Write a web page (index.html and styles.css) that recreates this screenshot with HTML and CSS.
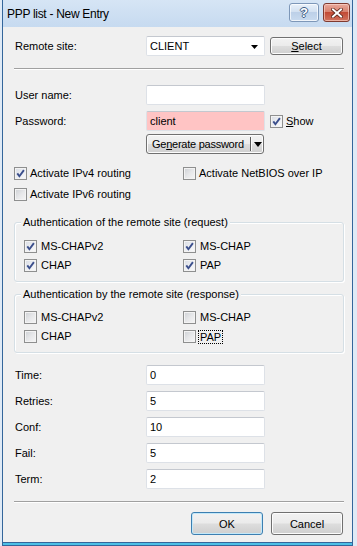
FILE: index.html
```html
<!DOCTYPE html>
<html>
<head>
<meta charset="utf-8">
<link rel="stylesheet" href="styles.css">
</head>
<body>
<div class="window">
  <div class="titlebar">
    <span class="title">PPP list - New Entry</span>
    <div class="tbtns">
      <span class="tb help">?</span>
      <span class="tb close">
        <svg width="12" height="10" viewBox="0 0 12 10">
          <path d="M2 1.5 L10 8.5 M10 1.5 L2 8.5" stroke="#5a2318" stroke-width="3.6" stroke-linecap="square"/>
          <path d="M2 1.5 L10 8.5 M10 1.5 L2 8.5" stroke="#ffffff" stroke-width="2" stroke-linecap="square"/>
        </svg>
      </span>
    </div>
  </div>
  <div class="client">
    <div class="row first">
      <span class="lbl">Remote site:</span>
      <div class="field combo"><span>CLIENT</span>
        <svg class="arrow" width="7" height="4" viewBox="0 0 7 4"><path d="M0 0 H7 L3.5 4 Z" fill="#000"/></svg>
      </div>
      <span class="btn select"><u>S</u>elect</span>
    </div>
    <div class="sep"></div>
    <div class="row sep-after">
      <span class="lbl">User name:</span>
      <div class="field"></div>
    </div>
    <div class="row gap">
      <span class="lbl">Password:</span>
      <div class="field pink">client</div>
      <span class="check show-cb">
        <span class="cb on"><svg width="11" height="11" viewBox="0 0 11 11"><path d="M2.3 5.4 L4.4 8.2 L8.9 2.1" fill="none" stroke="#3b4f8c" stroke-width="1.9"/></svg></span>
        <span><u>S</u>how</span>
      </span>
    </div>
    <div class="row genrow">
      <span class="lbl"></span>
      <span class="btn split">
        <span class="split-text">Ge<u>n</u>erate password</span>
        <span class="split-div"></span>
        <svg class="split-arrow" width="8" height="5" viewBox="0 0 8 5"><path d="M0 0 H8 L4 5 Z" fill="#000"/></svg>
      </span>
    </div>
    <div class="opts">
      <span class="check"><span class="cb on"><svg width="11" height="11" viewBox="0 0 11 11"><path d="M2.3 5.4 L4.4 8.2 L8.9 2.1" fill="none" stroke="#3b4f8c" stroke-width="1.9"/></svg></span><span>Activate IPv4 routing</span></span>
      <span class="check"><span class="cb"></span><span>Activate NetBIOS over IP</span></span>
      <span class="check"><span class="cb"></span><span>Activate IPv6 routing</span></span>
    </div>
    <div class="group g1">
      <div class="legend">Authentication of the remote site (request)</div>
      <div class="ggrid">
        <span class="check"><span class="cb on"><svg width="11" height="11" viewBox="0 0 11 11"><path d="M2.3 5.4 L4.4 8.2 L8.9 2.1" fill="none" stroke="#3b4f8c" stroke-width="1.9"/></svg></span><span>MS-CHAPv2</span></span>
        <span class="check"><span class="cb on"><svg width="11" height="11" viewBox="0 0 11 11"><path d="M2.3 5.4 L4.4 8.2 L8.9 2.1" fill="none" stroke="#3b4f8c" stroke-width="1.9"/></svg></span><span>MS-CHAP</span></span>
        <span class="check"><span class="cb on"><svg width="11" height="11" viewBox="0 0 11 11"><path d="M2.3 5.4 L4.4 8.2 L8.9 2.1" fill="none" stroke="#3b4f8c" stroke-width="1.9"/></svg></span><span>CHAP</span></span>
        <span class="check"><span class="cb on"><svg width="11" height="11" viewBox="0 0 11 11"><path d="M2.3 5.4 L4.4 8.2 L8.9 2.1" fill="none" stroke="#3b4f8c" stroke-width="1.9"/></svg></span><span>PAP</span></span>
      </div>
    </div>
    <div class="group g2">
      <div class="legend">Authentication by the remote site (response)</div>
      <div class="ggrid">
        <span class="check"><span class="cb"></span><span>MS-CHAPv2</span></span>
        <span class="check"><span class="cb"></span><span>MS-CHAP</span></span>
        <span class="check"><span class="cb"></span><span>CHAP</span></span>
        <span class="check"><span class="cb"></span><span class="focus">PAP</span></span>
      </div>
    </div>
    <div class="row nums">
      <span class="lbl">Time:</span>
      <div class="field">0</div>
    </div>
    <div class="row gap">
      <span class="lbl">Retries:</span>
      <div class="field">5</div>
    </div>
    <div class="row gap">
      <span class="lbl">Conf:</span>
      <div class="field">10</div>
    </div>
    <div class="row gap">
      <span class="lbl">Fail:</span>
      <div class="field">5</div>
    </div>
    <div class="row gap">
      <span class="lbl">Term:</span>
      <div class="field">2</div>
    </div>
    <div class="sep sep2"></div>
    <div class="actions">
      <span class="btn default">OK</span>
      <span class="btn">Cancel</span>
    </div>
  </div>
  <div class="bottomframe"></div>
</div>
</body>
</html>
```
FILE: styles.css
```css
* { box-sizing: border-box; }

html, body {
  margin: 0;
  padding: 0;
}

body {
  width: 357px;
  height: 546px;
  overflow: hidden;
  background: #dfeaf6;
  font-family: "Liberation Sans", Arial, sans-serif;
  font-size: 11px;
  color: #000;
}

.window {
  margin-left: 2px;
  width: 351px;
  height: 546px;
  border-left: 1px solid #34669b;
  border-right: 1px solid #34669b;
  display: flex;
  flex-direction: column;
}

.titlebar {
  height: 27px;
  flex: none;
  background: linear-gradient(#d6e5f5, #c6daf0);
  display: flex;
  justify-content: space-between;
  align-items: flex-start;
  padding: 0 2px 0 4px;
}

.title {
  font-size: 12px;
  line-height: 14px;
  margin-top: 7px;
  letter-spacing: -0.3px;
}

.tbtns {
  display: flex;
  gap: 4px;
  margin-top: 3px;
}

.tb {
  height: 19px;
  border-radius: 3px;
  display: flex;
  align-items: center;
  justify-content: center;
}

.help {
  width: 30px;
  border: 1px solid #7d97b8;
  background: linear-gradient(#e9f1fa 0%, #d3e1f1 45%, #bdd0e8 50%, #c9dbef 100%);
  box-shadow: inset 0 0 0 1px rgba(255,255,255,0.7);
  color: #fff;
  font-weight: bold;
  font-size: 13px;
  text-shadow: 1px 0 0 #3f5e86, -1px 0 0 #3f5e86, 0 1px 0 #3f5e86, 0 -1px 0 #3f5e86;
}

.close {
  width: 27px;
  border: 1px solid #7f3a30;
  background: linear-gradient(#e9a99c 0%, #d8826f 45%, #c24a35 50%, #d1735e 100%);
  box-shadow: inset 0 0 0 1px rgba(255,220,210,0.6);
}

.client {
  flex: 1;
  background: #f0f0f0;
  padding: 9px 9px 0 12px;
  display: flex;
  flex-direction: column;
}

.bottomframe {
  height: 4px;
  flex: none;
  border-top: 1px solid #34669b;
  border-bottom: 1px solid #34669b;
  background: #4cc0e6;
}

.row {
  display: flex;
  align-items: center;
  height: 20px;
}

.row.sep-after { margin-top: 15px; }
.row.gap { margin-top: 6px; }
.row.genrow { margin-top: 3px; }
.row.nums { margin-top: 12px; }

.lbl {
  width: 131px;
  flex: none;
}

.field {
  width: 119px;
  height: 20px;
  flex: none;
  background: #fff;
  border: 1px solid #dde1e7;
  border-top-color: #c4c8cf;
  border-radius: 2px;
  padding-left: 3px;
  display: flex;
  align-items: center;
}

.field.pink {
  background: #ffc4c4;
}

.combo {
  justify-content: space-between;
  padding-right: 6px;
}

.combo .arrow {
  margin-top: 1px;
}

.btn {
  height: 23px;
  width: 72px;
  flex: none;
  border: 1px solid #707070;
  border-radius: 3px;
  background: linear-gradient(#f2f2f2 0%, #ebebeb 48%, #dddddd 52%, #cfcfcf 100%);
  box-shadow: inset 0 0 0 1px #fcfcfc;
  display: flex;
  align-items: center;
  justify-content: center;
}

.btn.select {
  height: 18px;
  width: 73px;
  margin-left: 5px;
}

.btn.split {
  width: 118px;
  height: 20px;
  justify-content: flex-start;
  padding-left: 5px;
  gap: 0;
}

.split-text {
  width: 98px;
  white-space: nowrap;
  letter-spacing: -0.25px;
}

.split-div {
  width: 2px;
  height: 14px;
  border-left: 1px solid #5c5c5c;
  border-right: 1px solid #fafafa;
}

.split-arrow {
  margin-left: 2px;
  margin-top: 1px;
}

.btn.default {
  border-color: #3c7fb1;
  box-shadow: inset 0 0 0 1px #c3e8f9;
}

.sep {
  height: 2px;
  margin: 12px 0 0 -1px;
  width: 330px;
  border-top: 1px solid #a0a0a0;
  border-bottom: 1px solid #ffffff;
}

.sep2 {
  margin-top: 12px;
}

.check {
  display: flex;
  align-items: center;
  gap: 3px;
  height: 13px;
  line-height: 13px;
}

.cb {
  width: 13px;
  height: 13px;
  flex: none;
  border: 1px solid #8e8f8f;
  background: linear-gradient(135deg, #cdd0d4 0%, #e6e7e9 50%, #f6f6f6 100%);
  box-shadow: inset 0 0 0 1px #f3f3f3;
  display: flex;
  align-items: center;
  justify-content: center;
}

.cb.on {
  background: linear-gradient(135deg, #d7dbe3 0%, #eceef2 50%, #fafafa 100%);
}

.show-cb {
  margin-left: 5px;
}

.opts {
  margin: 13px 0 0 -1px;
  display: grid;
  grid-template-columns: 169px 1fr;
  row-gap: 8px;
}

.group {
  margin: 21px 0 0 -1px;
  width: 330px;
  border: 1px solid #d5dfe5;
  border-radius: 3px;
  box-shadow: inset 1px 1px 0 #fff, 1px 1px 0 #fff;
  padding: 0 9px 9px 9px;
}

.group.g2 {
  margin-top: 12px;
}

.legend {
  display: table;
  margin: -7px 0 0 -3px;
  padding: 0 2px;
  line-height: 13px;
  background: #f0f0f0;
}

.ggrid {
  margin-top: 11px;
  display: grid;
  grid-template-columns: 159px 1fr;
  row-gap: 6px;
}

.g2 .ggrid {
  margin-top: 10px;
}

.ggrid .check {
  gap: 4px;
}

.focus {
  outline: 1px dotted #000;
  outline-offset: 0;
  line-height: 12px;
  padding: 0 1px;
  margin-left: -1px;
}

.actions {
  margin-top: 9px;
  display: flex;
  justify-content: flex-end;
  gap: 8px;
}
```
